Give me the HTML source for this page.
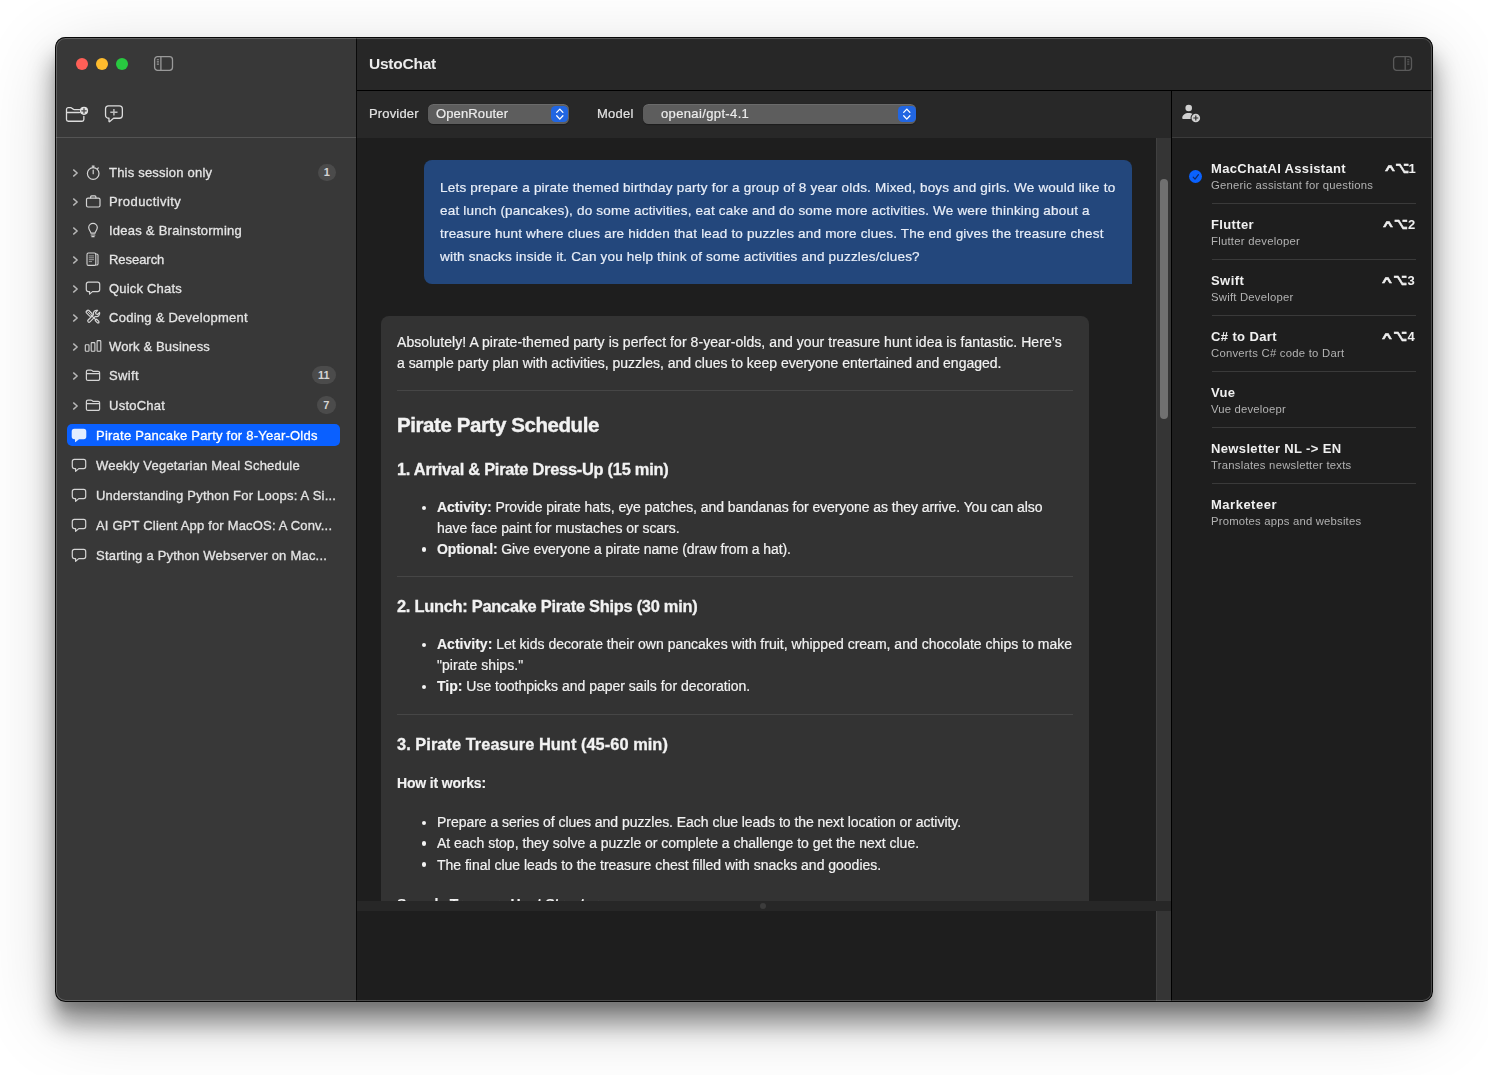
<!DOCTYPE html>
<html lang="en">
<head>
<meta charset="utf-8">
<title>UstoChat</title>
<style>
*{box-sizing:border-box;margin:0;padding:0}
html,body{width:1488px;height:1075px;overflow:hidden;background:#fff}
body{font-family:"Liberation Sans",sans-serif;color:#e6e6e6;position:relative}
.shadow{position:absolute;left:55px;top:37px;width:1378px;height:965px;border-radius:10px;
  box-shadow:0 21px 24.500px .9px rgba(0,0,0,.396),0 9px 9px -2.200px rgba(0,0,0,.142),0 19px 78px -3.400px rgba(0,0,0,.188)}
.win{position:absolute;left:55px;top:37px;width:1378px;height:965px;border-radius:10.500px;overflow:hidden;background:#1e1e1e}
.win:after{content:"";position:absolute;inset:0;border-radius:10.500px;box-shadow:inset 0 0 0 1px rgba(0,0,0,.92),inset 0 0 0 2px rgba(255,255,255,.2);pointer-events:none;z-index:50}
.abs{position:absolute}
.tx{position:absolute;line-height:20px;height:20px;white-space:nowrap;z-index:5;will-change:transform}
.tx b{font-weight:bold;-webkit-text-stroke:.15px}
/* ---------- sidebar ---------- */
.side{position:absolute;left:0;top:0;width:301px;height:965px;background:#383838}
.sdiv{position:absolute;left:301px;top:0;width:1px;height:965px;background:#0a0a0a}
.tl{position:absolute;top:21px;width:12px;height:12px;border-radius:50%}
.sline{position:absolute;left:0;top:100px;width:301px;height:1px;background:#545454}
.chev{position:absolute;left:17px}
.ic{position:absolute;left:28.400px;width:20px;height:20px}
.cic{position:absolute;left:16px}
.badge{position:absolute;height:17.500px;border-radius:9px;background:#4b4b4b;color:#d4d4d4;font-size:11px;line-height:17.500px;padding-top:.8px;text-align:center;font-weight:bold;z-index:6}
.sel{position:absolute;left:12px;top:387px;width:273px;height:22px;border-radius:5px;background:#0a60ff}
/* ---------- main ---------- */
.title{position:absolute;left:302px;top:0;width:1076px;height:53px;background:#272727}
.tline{position:absolute;left:302px;top:52.500px;width:1076px;height:1px;background:#000}
.pbar{position:absolute;left:302px;top:53.500px;width:814px;height:47px;background:#282828}
.selbox{position:absolute;top:13.500px;height:20px;border-radius:5.500px;background:#5d5d5d;box-shadow:inset 0 1px 0 rgba(255,255,255,.09),0 .5px 1px rgba(0,0,0,.3)}
.selbox .arr{position:absolute;right:.6px;top:2px;width:17.600px;height:16.400px;border-radius:4.500px;background:#2166e2}
.track{position:absolute;left:1101px;width:15px;background:#353535;border-left:1px solid #404040}
.thumb{position:absolute;left:1105px;top:142px;width:8px;height:240px;border-radius:4px;background:#707070}
.split{position:absolute;left:302px;top:863.500px;width:814px;height:10px;background:#272727;z-index:8}
.split i{position:absolute;left:403px;top:2.500px;width:6px;height:6px;border-radius:50%;background:#3c3c3c}
.lower{position:absolute;left:302px;top:873.500px;width:799px;height:92px;background:#1e1e1e;z-index:8}
.ubub{position:absolute;left:369px;top:123px;width:708px;height:124px;border-radius:8px 8px 0 8px;background:#23477c}
.abub{position:absolute;left:326px;top:279px;width:708px;height:600px;border-radius:8px;background:#333333}
.dot{position:absolute;left:366.600px;width:4.600px;height:4.600px;border-radius:50%;background:#f4f4f4;z-index:5;margin-top:-.3px}
.hr{position:absolute;left:342.400px;width:676px;height:1px;background:#464646;z-index:5}
/* ---------- right panel ---------- */
.rdiv{position:absolute;left:1116px;top:54px;width:1px;height:911px;background:#000;z-index:9}
.rtop{position:absolute;left:1117px;top:53.500px;width:261px;height:47px;background:#282828}
.rline{position:absolute;left:1117px;top:100px;width:261px;height:1px;background:#3b3b3b}
.adiv{position:absolute;left:1156.600px;width:204.400px;height:1px;background:#3a3a3a}
.ct{display:inline-block;margin-right:3.300px;-webkit-text-stroke:.5px #f0f0f0;transform:scale(1.3,1) translateY(.6px);transform-origin:left center}
.op{font-family:"DejaVu Sans",sans-serif;font-size:12px;-webkit-text-stroke:.45px #f0f0f0;display:inline-block;transform:scale(1,1.32) translateY(.4px);transform-origin:center 72%}
</style>
</head>
<body>
<div class="shadow"></div>
<div class="win">
<div class="side">
<div class="tl" style="left:21px;background:#fe5f57"></div>
<div class="tl" style="left:41px;background:#febc2e"></div>
<div class="tl" style="left:61px;background:#28c840"></div>
<svg class="abs" style="left:98px;top:18px" width="22" height="18" viewBox="0 0 22 18" fill="none" stroke="#9a9a9a" stroke-width="1.300"><rect x="1.600" y="1.650" width="17.900" height="13.700" rx="3"/><path d="M7.900 1.650v13.700"/><path d="M3.800 4.700h2.100M3.800 6.900h2.100M3.800 9.100h2.100" stroke-width="1.100"/></svg>
<svg class="abs" style="left:9px;top:67px" width="27" height="20" viewBox="0 0 27 20" fill="none" stroke="#dcdcdc" stroke-width="1.300" stroke-linejoin="round" stroke-linecap="round"><path d="M2.500 8.500H15.400M15.600 5.600H10.200c-.6 0-.9-.2-1.300-.6l-.9-.8c-.4-.4-.8-.55-1.400-.55H4.300a1.800 1.800 0 0 0-1.800 1.800V15.450a1.800 1.800 0 0 0 1.800 1.800H18.050a1.800 1.800 0 0 0 1.800-1.800V12.300"/><circle cx="20" cy="6.800" r="4.100" fill="#e2e2e2" stroke="none"/><path d="M20 4.600v4.400M17.800 6.800h4.400" stroke="#4a4a4a" stroke-width="1.300"/></svg>
<svg class="abs" style="left:48px;top:66px" width="22" height="22" viewBox="0 0 22 22" fill="none" stroke="#dcdcdc" stroke-width="1.300" stroke-linejoin="round" stroke-linecap="round"><path d="M5.550 2.850h10.800a3 3 0 0 1 3 3v6.400a3 3 0 0 1-3 3H10.600l-3.800 3.300c-.4.350-.8.200-.8-.35V15.250H5.550a3 3 0 0 1-3-3V5.850a3 3 0 0 1 3-3z"/><path d="M10.900 6v6.500M7.300 9.250h7.200" stroke="#bcbcbc" stroke-width="1.500" stroke-linecap="butt"/></svg>
<div class="sline"></div>
<svg class="chev" style="top:130.8px" width="7" height="10" viewBox="0 0 7 10" fill="none" stroke="#b8b8b8" stroke-width="1.400" stroke-linecap="round" stroke-linejoin="round"><path d="M1.600 1.900 5.200 5 1.600 8.100"/></svg>
<svg class="ic" style="top:125.2px" viewBox="0 0 20 20" fill="none" stroke="#d4d4d4" stroke-width="1.200" stroke-linecap="round" stroke-linejoin="round"><circle cx="10.200" cy="11.500" r="5.800"/><path d="M10.200 8v3.700M9.200 4.100h2M10.200 4.200v1.400M14.700 6.500l.6-.6"/></svg>
<svg class="chev" style="top:159.8px" width="7" height="10" viewBox="0 0 7 10" fill="none" stroke="#b8b8b8" stroke-width="1.400" stroke-linecap="round" stroke-linejoin="round"><path d="M1.600 1.900 5.200 5 1.600 8.100"/></svg>
<svg class="ic" style="top:154.2px" viewBox="0 0 20 20" fill="none" stroke="#d4d4d4" stroke-width="1.200" stroke-linecap="round" stroke-linejoin="round"><rect x="3.500" y="7.100" width="13.500" height="8.900" rx="1.500"/><path d="M7.600 7V5.900a1 1 0 0 1 1-1h3.300a1 1 0 0 1 1 1V7"/></svg>
<svg class="chev" style="top:188.8px" width="7" height="10" viewBox="0 0 7 10" fill="none" stroke="#b8b8b8" stroke-width="1.400" stroke-linecap="round" stroke-linejoin="round"><path d="M1.600 1.900 5.200 5 1.600 8.100"/></svg>
<svg class="ic" style="top:183.2px" viewBox="0 0 20 20" fill="none" stroke="#d4d4d4" stroke-width="1.200" stroke-linecap="round" stroke-linejoin="round"><path d="M8 13.200c0-1.500-2.300-2.900-2.300-5.600a4.300 4.300 0 0 1 8.600 0c0 2.700-2.300 4.100-2.300 5.600z"/><path d="M8.200 15h3.600M8.900 16.700h2.200"/></svg>
<svg class="chev" style="top:217.8px" width="7" height="10" viewBox="0 0 7 10" fill="none" stroke="#b8b8b8" stroke-width="1.400" stroke-linecap="round" stroke-linejoin="round"><path d="M1.600 1.900 5.200 5 1.600 8.100"/></svg>
<svg class="ic" style="top:212.2px" viewBox="0 0 20 20" fill="none" stroke="#d4d4d4" stroke-width="1.100" stroke-linecap="round" stroke-linejoin="round"><rect x="4" y="4" width="8.800" height="12.400" rx="1.400"/><path d="M13 5h.7a1.300 1.300 0 0 1 1.300 1.300v8.400a1.300 1.300 0 0 1-1.300 1.300H13"/><path d="M6.200 6.900h4.400M6.200 8.800h4.400M6.200 10.700h4.400M6.200 12.600h2.400" stroke-width=".8" stroke="#b8b8b8"/></svg>
<svg class="chev" style="top:246.8px" width="7" height="10" viewBox="0 0 7 10" fill="none" stroke="#b8b8b8" stroke-width="1.400" stroke-linecap="round" stroke-linejoin="round"><path d="M1.600 1.900 5.200 5 1.600 8.100"/></svg>
<svg class="ic" style="top:241.2px" viewBox="0 0 20 20" fill="none" stroke="#d4d4d4" stroke-width="1.200" stroke-linecap="round" stroke-linejoin="round"><path d="M5.300 4.200h9.400a2 2 0 0 1 2 2v5.400a2 2 0 0 1-2 2H9.500l-2.900 2.500v-2.500H5.300a2 2 0 0 1-2-2V6.200a2 2 0 0 1 2-2z"/></svg>
<svg class="chev" style="top:275.8px" width="7" height="10" viewBox="0 0 7 10" fill="none" stroke="#b8b8b8" stroke-width="1.400" stroke-linecap="round" stroke-linejoin="round"><path d="M1.600 1.900 5.200 5 1.600 8.100"/></svg>
<svg class="ic" style="top:270.2px" viewBox="0 0 20 20" fill="none" stroke="#d4d4d4" stroke-width="1.200" stroke-linecap="round" stroke-linejoin="round"><g transform="rotate(45 10 10)"><path d="M8.700 7.900V15.600a1.300 1.300 0 0 0 2.600 0V7.900"/><path d="M8.700 8a3.300 3.300 0 0 1-.1-5.900V5l1.400.8L11.400 5V2.100A3.300 3.300 0 0 1 11.300 8"/></g><g transform="rotate(-45 10 10)"><rect x="8.300" y="1.300" width="3.400" height="6.600" rx="1.200" fill="#383838"/><path d="M10 2.600v3.800" stroke-width=".8"/><path d="M10 7.900v6.200M9 14.100h2v3.200l-1 1-1-1z" fill="#383838"/></g></svg>
<svg class="chev" style="top:304.8px" width="7" height="10" viewBox="0 0 7 10" fill="none" stroke="#b8b8b8" stroke-width="1.400" stroke-linecap="round" stroke-linejoin="round"><path d="M1.600 1.900 5.200 5 1.600 8.100"/></svg>
<svg class="ic" style="top:299.2px" viewBox="0 0 20 20" fill="none" stroke="#d4d4d4" stroke-width="1.100" stroke-linecap="round" stroke-linejoin="round"><rect x="2.300" y="8.800" width="3.700" height="6.400" rx=".8"/><rect x="8.200" y="6.600" width="3.700" height="8.600" rx=".8"/><rect x="14.100" y="4.600" width="3.700" height="10.600" rx=".8"/></svg>
<svg class="chev" style="top:333.8px" width="7" height="10" viewBox="0 0 7 10" fill="none" stroke="#b8b8b8" stroke-width="1.400" stroke-linecap="round" stroke-linejoin="round"><path d="M1.600 1.900 5.200 5 1.600 8.100"/></svg>
<svg class="ic" style="top:328.2px" viewBox="0 0 20 20" fill="none" stroke="#d4d4d4" stroke-width="1.200" stroke-linecap="round" stroke-linejoin="round"><path d="M3.400 8.600h13.200M4.900 5.100h2.900c.6 0 .9.200 1.300.5l.8.700h5.200a1.500 1.500 0 0 1 1.500 1.500v6.100a1.500 1.500 0 0 1-1.500 1.500H4.900a1.500 1.500 0 0 1-1.500-1.500V6.600a1.500 1.500 0 0 1 1.500-1.500z"/></svg>
<svg class="chev" style="top:363.6px" width="7" height="10" viewBox="0 0 7 10" fill="none" stroke="#b8b8b8" stroke-width="1.400" stroke-linecap="round" stroke-linejoin="round"><path d="M1.600 1.900 5.200 5 1.600 8.100"/></svg>
<svg class="ic" style="top:358.0px" viewBox="0 0 20 20" fill="none" stroke="#d4d4d4" stroke-width="1.200" stroke-linecap="round" stroke-linejoin="round"><path d="M3.400 8.600h13.200M4.900 5.100h2.900c.6 0 .9.200 1.300.5l.8.700h5.200a1.500 1.500 0 0 1 1.500 1.500v6.100a1.500 1.500 0 0 1-1.500 1.500H4.900a1.500 1.500 0 0 1-1.500-1.500V6.600a1.500 1.500 0 0 1 1.500-1.500z"/></svg>
<span class="badge" style="left:263.0px;width:17.7px;top:126.5px">1</span>
<span class="badge" style="left:257.0px;width:23.7px;top:329.4px">11</span>
<span class="badge" style="left:261.7px;width:19.0px;top:359.2px">7</span>
<div class="sel"></div>
<svg class="cic" style="top:391.4px;z-index:6" width="16" height="15" viewBox="0 0 16 15" fill="#e3edff"><path d="M3.300.8h9.400a2.600 2.600 0 0 1 2.600 2.600v5.200a2.600 2.600 0 0 1-2.600 2.600H8l-3.400 2.900c-.4.300-.6.100-.6-.3v-2.600h-.7A2.600 2.600 0 0 1 .7 8.600V3.400A2.600 2.600 0 0 1 3.300.8z"/></svg>
<svg class="cic" style="top:421.4px" width="16" height="15" viewBox="0 0 16 15" fill="none" stroke="#d4d4d4" stroke-width="1.200" stroke-linejoin="round"><path d="M3.300 1.400h9.400a2 2 0 0 1 2 2v5.200a2 2 0 0 1-2 2H7.800l-3.200 2.700v-2.700H3.300a2 2 0 0 1-2-2V3.400a2 2 0 0 1 2-2z"/></svg>
<svg class="cic" style="top:451.4px" width="16" height="15" viewBox="0 0 16 15" fill="none" stroke="#d4d4d4" stroke-width="1.200" stroke-linejoin="round"><path d="M3.300 1.400h9.400a2 2 0 0 1 2 2v5.200a2 2 0 0 1-2 2H7.800l-3.200 2.700v-2.700H3.300a2 2 0 0 1-2-2V3.400a2 2 0 0 1 2-2z"/></svg>
<svg class="cic" style="top:481.4px" width="16" height="15" viewBox="0 0 16 15" fill="none" stroke="#d4d4d4" stroke-width="1.200" stroke-linejoin="round"><path d="M3.300 1.400h9.400a2 2 0 0 1 2 2v5.200a2 2 0 0 1-2 2H7.800l-3.200 2.700v-2.700H3.300a2 2 0 0 1-2-2V3.400a2 2 0 0 1 2-2z"/></svg>
<svg class="cic" style="top:511.4px" width="16" height="15" viewBox="0 0 16 15" fill="none" stroke="#d4d4d4" stroke-width="1.200" stroke-linejoin="round"><path d="M3.300 1.400h9.400a2 2 0 0 1 2 2v5.200a2 2 0 0 1-2 2H7.800l-3.200 2.700v-2.700H3.300a2 2 0 0 1-2-2V3.400a2 2 0 0 1 2-2z"/></svg>
</div><div class="sdiv"></div>
<div class="title"><svg class="abs" style="left:1035px;top:18px" width="22" height="18" viewBox="0 0 22 18" fill="none" stroke="#5a5a5a" stroke-width="1.300"><rect x="1.600" y="1.650" width="17.900" height="13.700" rx="3"/><path d="M13.200 1.650v13.700"/><path d="M15.200 4.700h2.100M15.200 6.900h2.100M15.200 9.100h2.100" stroke-width="1.100"/></svg></div>
<div class="tline"></div>
<div class="pbar">
<div class="selbox" style="left:71px;width:141px"><div class="arr"><svg style="display:block" width="17.600" height="16.400" viewBox="0 0 17.600 16.400" fill="none" stroke="#fff" stroke-width="1.300" stroke-linecap="round" stroke-linejoin="round"><path d="M5.700 6.400 8.800 3.100l3.100 3.300M5.700 9.800l3.100 3.300 3.100-3.300"/></svg></div></div>
<div class="selbox" style="left:286.300px;width:273px"><div class="arr"><svg style="display:block" width="17.600" height="16.400" viewBox="0 0 17.600 16.400" fill="none" stroke="#fff" stroke-width="1.300" stroke-linecap="round" stroke-linejoin="round"><path d="M5.700 6.400 8.800 3.100l3.100 3.300M5.700 9.800l3.100 3.300 3.100-3.300"/></svg></div></div>
</div>
<div class="ubub"></div>
<div class="abub"></div>
<div class="hr" style="top:352.9px"></div>
<div class="hr" style="top:539.1px"></div>
<div class="hr" style="top:677.3px"></div>
<i class="dot" style="top:468.8px"></i>
<i class="dot" style="top:510.6px"></i>
<i class="dot" style="top:606.0px"></i>
<i class="dot" style="top:647.9px"></i>
<i class="dot" style="top:783.8px"></i>
<i class="dot" style="top:804.5px"></i>
<i class="dot" style="top:825.3px"></i>
<div class="track" style="top:100.500px;height:763px"></div>
<div class="track" style="top:873.500px;height:92px;z-index:9"></div>
<div class="thumb"></div>
<div class="split"><i></i></div>
<div class="lower"></div>
<div class="rdiv"></div>
<div class="rtop">
<svg class="abs" style="left:8px;top:11.500px" width="22" height="22" viewBox="0 0 22 22" fill="#d0d0d0"><circle cx="8.700" cy="6" r="3.300"/><path d="M2.200 16.200c0-3.300 2.900-5.300 6.500-5.300 1.700 0 3.200.4 4.300 1.200a5 5 0 0 0-1.500 4.800H3.300c-.7 0-1.100-.3-1.100-.7z"/><circle cx="15.800" cy="16" r="5.300" fill="#282828"/><circle cx="15.800" cy="16" r="4.300"/><path d="M15.800 13.500v5M13.300 16h5" stroke="#303030" stroke-width="1.200" fill="none"/></svg>
</div>
<div class="rline"></div>
<div class="abs" style="left:1133.700px;top:132.700px;width:13.600px;height:13.600px;border-radius:50%;background:#0a62ff"><svg style="display:block" width="13.600" height="13.600" viewBox="0 0 14 14" fill="none" stroke="#0e2a6a" stroke-width="1.300" stroke-linecap="round" stroke-linejoin="round"><path d="M4.300 7.400 6.200 9.400 9.700 4.800"/></svg></div>
<div class="adiv" style="top:165.9px"></div>
<div class="adiv" style="top:221.9px"></div>
<div class="adiv" style="top:277.9px"></div>
<div class="adiv" style="top:333.9px"></div>
<div class="adiv" style="top:389.9px"></div>
<div class="adiv" style="top:445.9px"></div>
<div id="r0" class="tx" style="left:54.0px;top:126.00px;font-size:13px;font-weight:normal;color:#e4e4e4;letter-spacing:0.205px;-webkit-text-stroke:.3px #e4e4e4">This session only</div>
<div id="r1" class="tx" style="left:54.0px;top:155.00px;font-size:13px;font-weight:normal;color:#e4e4e4;letter-spacing:0.425px;-webkit-text-stroke:.3px #e4e4e4">Productivity</div>
<div id="r2" class="tx" style="left:54.0px;top:184.00px;font-size:13px;font-weight:normal;color:#e4e4e4;letter-spacing:0.243px;-webkit-text-stroke:.3px #e4e4e4">Ideas &amp; Brainstorming</div>
<div id="r3" class="tx" style="left:54.0px;top:213.00px;font-size:13px;font-weight:normal;color:#e4e4e4;letter-spacing:-0.043px;-webkit-text-stroke:.3px #e4e4e4">Research</div>
<div id="r4" class="tx" style="left:54.0px;top:242.00px;font-size:13px;font-weight:normal;color:#e4e4e4;letter-spacing:0.199px;-webkit-text-stroke:.3px #e4e4e4">Quick Chats</div>
<div id="r5" class="tx" style="left:54.0px;top:271.00px;font-size:13px;font-weight:normal;color:#e4e4e4;letter-spacing:0.260px;-webkit-text-stroke:.3px #e4e4e4">Coding &amp; Development</div>
<div id="r6" class="tx" style="left:54.0px;top:300.00px;font-size:13px;font-weight:normal;color:#e4e4e4;letter-spacing:0.150px;-webkit-text-stroke:.3px #e4e4e4">Work &amp; Business</div>
<div id="r7" class="tx" style="left:54.0px;top:329.00px;font-size:13px;font-weight:normal;color:#e4e4e4;letter-spacing:0.366px;-webkit-text-stroke:.3px #e4e4e4">Swift</div>
<div id="r8" class="tx" style="left:54.0px;top:359.00px;font-size:13px;font-weight:normal;color:#e4e4e4;letter-spacing:0.250px;-webkit-text-stroke:.3px #e4e4e4">UstoChat</div>
<div id="c0" class="tx" style="left:41.0px;top:389.00px;font-size:13px;font-weight:normal;color:#ffffff;letter-spacing:0.230px;-webkit-text-stroke:.3px #ffffff">Pirate Pancake Party for 8-Year-Olds</div>
<div id="c1" class="tx" style="left:41.0px;top:419.00px;font-size:13px;font-weight:normal;color:#e4e4e4;letter-spacing:0.197px;-webkit-text-stroke:.3px #e4e4e4">Weekly Vegetarian Meal Schedule</div>
<div id="c2" class="tx" style="left:41.0px;top:449.00px;font-size:13px;font-weight:normal;color:#e4e4e4;letter-spacing:0.229px;-webkit-text-stroke:.3px #e4e4e4">Understanding Python For Loops: A Si...</div>
<div id="c3" class="tx" style="left:41.0px;top:479.00px;font-size:13px;font-weight:normal;color:#e4e4e4;letter-spacing:0.182px;-webkit-text-stroke:.3px #e4e4e4">AI GPT Client App for MacOS: A Conv...</div>
<div id="c4" class="tx" style="left:41.0px;top:509.00px;font-size:13px;font-weight:normal;color:#e4e4e4;letter-spacing:0.218px;-webkit-text-stroke:.3px #e4e4e4">Starting a Python Webserver on Mac...</div>
<div id="ttl" class="tx" style="left:314.0px;top:17.00px;font-size:15.5px;font-weight:bold;color:#ececec;letter-spacing:-0.236px;">UstoChat</div>
<div id="pl" class="tx" style="left:314.0px;top:67.00px;font-size:13px;font-weight:normal;color:#e2e2e2;letter-spacing:0.160px;-webkit-text-stroke:.2px #e2e2e2">Provider</div>
<div id="pv" class="tx" style="left:381.0px;top:67.00px;font-size:13px;font-weight:normal;color:#ececec;letter-spacing:0.137px;-webkit-text-stroke:.2px #ececec">OpenRouter</div>
<div id="ml" class="tx" style="left:542.0px;top:67.00px;font-size:13px;font-weight:normal;color:#e2e2e2;letter-spacing:0.276px;-webkit-text-stroke:.2px #e2e2e2">Model</div>
<div id="mv" class="tx" style="left:606.0px;top:67.00px;font-size:13px;font-weight:normal;color:#ececec;letter-spacing:0.363px;-webkit-text-stroke:.2px #ececec">openai/gpt-4.1</div>
<div id="u0" class="tx" style="left:385.0px;top:141.00px;font-size:13.5px;font-weight:normal;color:#e8eef8;letter-spacing:0.205px;-webkit-text-stroke:.2px #e8eef8">Lets prepare a pirate themed birthday party for a group of 8 year olds. Mixed, boys and girls. We would like to</div>
<div id="u1" class="tx" style="left:385.0px;top:164.00px;font-size:13.5px;font-weight:normal;color:#e8eef8;letter-spacing:0.189px;-webkit-text-stroke:.2px #e8eef8">eat lunch (pancakes), do some activities, eat cake and do some more activities. We were thinking about a</div>
<div id="u2" class="tx" style="left:385.0px;top:187.00px;font-size:13.5px;font-weight:normal;color:#e8eef8;letter-spacing:0.196px;-webkit-text-stroke:.2px #e8eef8">treasure hunt where clues are hidden that lead to puzzles and more clues. The end gives the treasure chest</div>
<div id="u3" class="tx" style="left:385.0px;top:210.00px;font-size:13.5px;font-weight:normal;color:#e8eef8;letter-spacing:0.194px;-webkit-text-stroke:.2px #e8eef8">with snacks inside it. Can you help think of some activities and puzzles/clues?</div>
<div id="a0" class="tx" style="left:342.0px;top:295.00px;font-size:14px;font-weight:normal;color:#f2f2f2;letter-spacing:0.068px;-webkit-text-stroke:.2px #f2f2f2">Absolutely! A pirate-themed party is perfect for 8-year-olds, and your treasure hunt idea is fantastic. Here’s</div>
<div id="a1" class="tx" style="left:342.0px;top:316.00px;font-size:14px;font-weight:normal;color:#f2f2f2;letter-spacing:-0.020px;-webkit-text-stroke:.2px #f2f2f2">a sample party plan with activities, puzzles, and clues to keep everyone entertained and engaged.</div>
<div id="h2" class="tx" style="left:342.0px;top:378.00px;font-size:20.5px;font-weight:bold;color:#f2f2f2;letter-spacing:-0.419px;-webkit-text-stroke:.4px #f2f2f2">Pirate Party Schedule</div>
<div id="h3a" class="tx" style="left:342.0px;top:422.00px;font-size:16.4px;font-weight:bold;color:#f2f2f2;letter-spacing:-0.256px;-webkit-text-stroke:.3px #f2f2f2">1. Arrival &amp; Pirate Dress-Up (15 min)</div>
<div id="l0" class="tx" style="left:382.0px;top:460.00px;font-size:14px;font-weight:normal;color:#f2f2f2;letter-spacing:-0.072px;-webkit-text-stroke:.2px #f2f2f2"><b>Activity:</b> Provide pirate hats, eye patches, and bandanas for everyone as they arrive. You can also</div>
<div id="l1" class="tx" style="left:382.0px;top:481.00px;font-size:14px;font-weight:normal;color:#f2f2f2;letter-spacing:-0.047px;-webkit-text-stroke:.2px #f2f2f2">have face paint for mustaches or scars.</div>
<div id="l2" class="tx" style="left:382.0px;top:502.00px;font-size:14px;font-weight:normal;color:#f2f2f2;letter-spacing:-0.101px;-webkit-text-stroke:.2px #f2f2f2"><b>Optional:</b> Give everyone a pirate name (draw from a hat).</div>
<div id="h3b" class="tx" style="left:342.0px;top:559.00px;font-size:16.4px;font-weight:bold;color:#f2f2f2;letter-spacing:-0.262px;-webkit-text-stroke:.3px #f2f2f2">2. Lunch: Pancake Pirate Ships (30 min)</div>
<div id="l3" class="tx" style="left:382.0px;top:597.00px;font-size:14px;font-weight:normal;color:#f2f2f2;letter-spacing:0.008px;-webkit-text-stroke:.2px #f2f2f2"><b>Activity:</b> Let kids decorate their own pancakes with fruit, whipped cream, and chocolate chips to make</div>
<div id="l4" class="tx" style="left:382.0px;top:618.00px;font-size:14px;font-weight:normal;color:#f2f2f2;letter-spacing:0.052px;-webkit-text-stroke:.2px #f2f2f2">"pirate ships."</div>
<div id="l5" class="tx" style="left:382.0px;top:639.00px;font-size:14px;font-weight:normal;color:#f2f2f2;letter-spacing:-0.003px;-webkit-text-stroke:.2px #f2f2f2"><b>Tip:</b> Use toothpicks and paper sails for decoration.</div>
<div id="h3c" class="tx" style="left:342.0px;top:697.00px;font-size:16.4px;font-weight:bold;color:#f2f2f2;letter-spacing:0.036px;-webkit-text-stroke:.3px #f2f2f2">3. Pirate Treasure Hunt (45-60 min)</div>
<div id="hw" class="tx" style="left:342.0px;top:736.00px;font-size:14px;font-weight:normal;color:#f2f2f2;letter-spacing:-0.155px;"><b>How it works:</b></div>
<div id="l6" class="tx" style="left:382.0px;top:775.00px;font-size:14px;font-weight:normal;color:#f2f2f2;letter-spacing:-0.037px;-webkit-text-stroke:.2px #f2f2f2">Prepare a series of clues and puzzles. Each clue leads to the next location or activity.</div>
<div id="l7" class="tx" style="left:382.0px;top:796.00px;font-size:14px;font-weight:normal;color:#f2f2f2;letter-spacing:-0.016px;-webkit-text-stroke:.2px #f2f2f2">At each stop, they solve a puzzle or complete a challenge to get the next clue.</div>
<div id="l8" class="tx" style="left:382.0px;top:818.00px;font-size:14px;font-weight:normal;color:#f2f2f2;letter-spacing:-0.014px;-webkit-text-stroke:.2px #f2f2f2">The final clue leads to the treasure chest filled with snacks and goodies.</div>
<div id="st" class="tx" style="left:342.0px;top:857.00px;font-size:14px;font-weight:normal;color:#f2f2f2;letter-spacing:0.000px;letter-spacing:-.15px"><b>Sample Treasure Hunt Structure:</b></div>
<div id="n0" class="tx" style="left:1156.0px;top:122.00px;font-size:13px;font-weight:bold;color:#f0f0f0;letter-spacing:0.325px;">MacChatAI Assistant</div>
<div id="s0" class="tx" style="left:1156.0px;top:138.00px;font-size:11.3px;font-weight:normal;color:#b2b2b2;letter-spacing:0.229px;">Generic assistant for questions</div>
<div id="k0" class="tx" style="left:1330.0px;top:122.00px;font-size:13px;font-weight:bold;color:#f0f0f0;letter-spacing:-0.584px;"><span class="ct">^</span><span class="op">⌥</span>1</div>
<div id="n1" class="tx" style="left:1156.0px;top:178.00px;font-size:13px;font-weight:bold;color:#f0f0f0;letter-spacing:0.350px;">Flutter</div>
<div id="s1" class="tx" style="left:1156.0px;top:194.00px;font-size:11.3px;font-weight:normal;color:#b2b2b2;letter-spacing:0.254px;">Flutter developer</div>
<div id="k1" class="tx" style="left:1328.0px;top:178.00px;font-size:13px;font-weight:bold;color:#f0f0f0;letter-spacing:0.082px;"><span class="ct">^</span><span class="op">⌥</span>2</div>
<div id="n2" class="tx" style="left:1156.0px;top:234.00px;font-size:13px;font-weight:bold;color:#f0f0f0;letter-spacing:0.447px;">Swift</div>
<div id="s2" class="tx" style="left:1156.0px;top:250.00px;font-size:11.3px;font-weight:normal;color:#b2b2b2;letter-spacing:0.225px;">Swift Developer</div>
<div id="k2" class="tx" style="left:1327.0px;top:234.00px;font-size:13px;font-weight:bold;color:#f0f0f0;letter-spacing:0.416px;"><span class="ct">^</span><span class="op">⌥</span>3</div>
<div id="n3" class="tx" style="left:1156.0px;top:290.00px;font-size:13px;font-weight:bold;color:#f0f0f0;letter-spacing:0.388px;">C# to Dart</div>
<div id="s3" class="tx" style="left:1156.0px;top:306.00px;font-size:11.3px;font-weight:normal;color:#b2b2b2;letter-spacing:0.243px;">Converts C# code to Dart</div>
<div id="k3" class="tx" style="left:1327.0px;top:290.00px;font-size:13px;font-weight:bold;color:#f0f0f0;letter-spacing:0.416px;"><span class="ct">^</span><span class="op">⌥</span>4</div>
<div id="n4" class="tx" style="left:1156.0px;top:346.00px;font-size:13px;font-weight:bold;color:#f0f0f0;letter-spacing:0.347px;">Vue</div>
<div id="s4" class="tx" style="left:1156.0px;top:362.00px;font-size:11.3px;font-weight:normal;color:#b2b2b2;letter-spacing:0.189px;">Vue develoepr</div>
<div id="n5" class="tx" style="left:1156.0px;top:402.00px;font-size:13px;font-weight:bold;color:#f0f0f0;letter-spacing:0.359px;">Newsletter NL -&gt; EN</div>
<div id="s5" class="tx" style="left:1156.0px;top:418.00px;font-size:11.3px;font-weight:normal;color:#b2b2b2;letter-spacing:0.242px;">Translates newsletter texts</div>
<div id="n6" class="tx" style="left:1156.0px;top:458.00px;font-size:13px;font-weight:bold;color:#f0f0f0;letter-spacing:0.507px;">Marketeer</div>
<div id="s6" class="tx" style="left:1156.0px;top:474.00px;font-size:11.3px;font-weight:normal;color:#b2b2b2;letter-spacing:0.201px;">Promotes apps and websites</div>
</div>
</body>
</html>
